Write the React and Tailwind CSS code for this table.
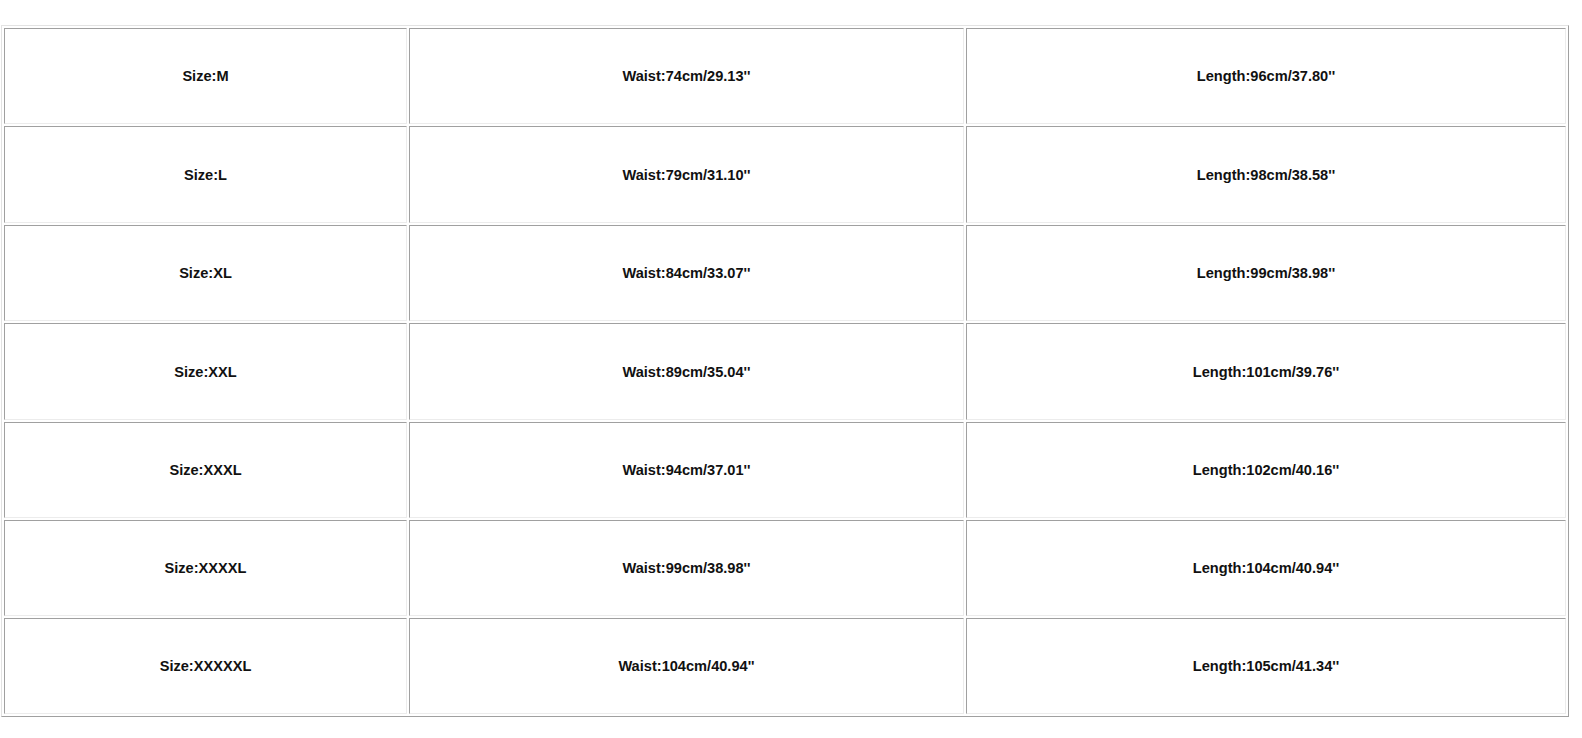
const rows = [
  ["Size:M", "Waist:74cm/29.13''", "Length:96cm/37.80''"],
  ["Size:L", "Waist:79cm/31.10''", "Length:98cm/38.58''"],
  ["Size:XL", "Waist:84cm/33.07''", "Length:99cm/38.98''"],
  ["Size:XXL", "Waist:89cm/35.04''", "Length:101cm/39.76''"],
  ["Size:XXXL", "Waist:94cm/37.01''", "Length:102cm/40.16''"],
  ["Size:XXXXL", "Waist:99cm/38.98''", "Length:104cm/40.94''"],
  ["Size:XXXXXL", "Waist:104cm/40.94''", "Length:105cm/41.34''"],
];

const heights = ["h-[96px]", "h-[97px]", "h-[96px]", "h-[97px]", "h-[96px]", "h-[96px]", "h-[96px]"];

export default function App() {
  return (
    <div className="bg-white min-h-[738px] pt-[25px] pl-[1px]" style={{ fontFamily: '"Liberation Sans", Arial, sans-serif' }}>
      <table className="w-[1568px] border-separate border-spacing-[2px] border border-t-[#e3e3e3] border-l-[#e3e3e3] border-r-[#a0a0a0] border-b-[#a0a0a0] table-fixed">
        <colgroup>
          <col className="w-[403px]" />
          <col className="w-[555px]" />
          <col className="w-[600px]" />
        </colgroup>
        <tbody>
          {rows.map((r, i) => (
            <tr key={i}>
              {r.map((c, j) => (
                <td
                  key={j}
                  className={`${heights[i]} px-0 pt-[2px] pb-0 text-center align-middle text-[14.6px] font-bold text-[#111] border border-t-[#a0a0a0] border-l-[#a0a0a0] border-r-[#ececec] border-b-[#ececec]`}
                >
                  {c}
                </td>
              ))}
            </tr>
          ))}
        </tbody>
      </table>
    </div>
  );
}
